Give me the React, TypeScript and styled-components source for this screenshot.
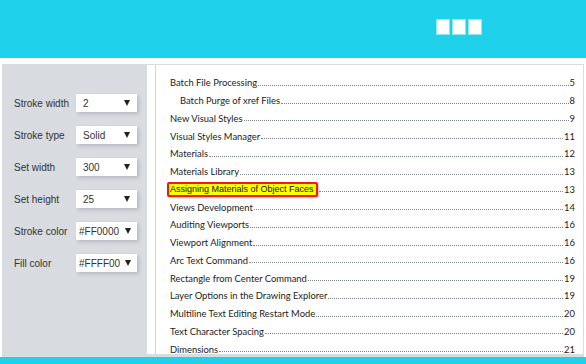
import styled, { createGlobalStyle } from 'styled-components';

const GlobalStyle = createGlobalStyle`
    html, body {
        margin: 0;
        padding: 0;
        background: #FFFFFF;
    }
    body {
        width: 586px;
        height: 364px;
        overflow: hidden;
        font-family: "Liberation Sans", Arial, sans-serif;
    }
`

const settings = [
    {label: 'Stroke width', value: '2', color: false},
    {label: 'Stroke type', value: 'Solid', color: false},
    {label: 'Set width', value: '300', color: false},
    {label: 'Set height', value: '25', color: false},
    {label: 'Stroke color', value: '#FF0000', color: true},
    {label: 'Fill color', value: '#FFFF00', color: true},
];

const entries = [
    {title: 'Batch File Processing', page: '5'},
    {title: 'Batch Purge of xref Files', page: '8', sub: true},
    {title: 'New Visual Styles', page: '9'},
    {title: 'Visual Styles Manager', page: '11'},
    {title: 'Materials', page: '12'},
    {title: 'Materials Library', page: '13'},
    {title: 'Assigning Materials of Object Faces', page: '13', marked: true},
    {title: 'Views Development', page: '14'},
    {title: 'Auditing Viewports', page: '16'},
    {title: 'Viewport Alignment', page: '16'},
    {title: 'Arc Text Command', page: '16'},
    {title: 'Rectangle from Center Command', page: '19'},
    {title: 'Layer Options in the Drawing Explorer', page: '19'},
    {title: 'Multiline Text Editing Restart Mode', page: '20'},
    {title: 'Text Character Spacing', page: '20'},
    {title: 'Dimensions', page: '21'},
];

export default function App(){
    return(
        <Container>
            <GlobalStyle/>
            <Header>
                <WindowBtn/>
                <WindowBtn/>
                <WindowBtn/>
            </Header>
            <Main>
                <SidePanel>
                    {settings.map((s) => (
                        <SettingRow key={s.label}>
                            <Label>{s.label}</Label>
                            <Select $color={s.color}>
                                <span>{s.value}</span>
                                <Arrow/>
                            </Select>
                        </SettingRow>
                    ))}
                </SidePanel>
                <Page>
                    <Sheet>
                        {entries.map((e) => (
                            <TocRow key={e.title} $sub={!!e.sub}>
                                {e.marked ? <Mark>{e.title}</Mark> : <Title>{e.title}</Title>}
                                <Leader/>
                                <PageNum>{e.page}</PageNum>
                            </TocRow>
                        ))}
                    </Sheet>
                </Page>
            </Main>
            <Footer/>
        </Container>
    );
}

const Container = styled.div`
    width: 586px;
    height: 364px;
    display: flex;
    flex-direction: column;
    overflow: hidden;
`
const Header = styled.div`
    height: 58px;
    flex-shrink: 0;
    background-color: #20D1EC;
    display: flex;
    justify-content: flex-end;
    align-items: flex-start;
    gap: 4px;
    padding: 20px 105px 0 0;
    box-sizing: border-box;
`
const WindowBtn = styled.div`
    width: 12px;
    height: 14px;
    background: #FFFFFF;
    box-shadow: 0 0 0 1px rgba(255, 255, 255, 0.5);
`
const Main = styled.div`
    margin: 6px 2px 0 2px;
    height: 293px;
    flex-shrink: 0;
    display: flex;
    background-color: #D8DBE0;
`
const SidePanel = styled.div`
    width: 145px;
    flex-shrink: 0;
    display: flex;
    flex-direction: column;
    gap: 14px;
    padding: 30px 0 0 12px;
    box-sizing: border-box;
`
const SettingRow = styled.div`
    display: flex;
    align-items: center;
    height: 18px;
`
const Label = styled.div`
    width: 62px;
    font-size: 10px;
    color: #333333;
`
const Select = styled.div<{$color: boolean}>`
    width: 61px;
    height: 18px;
    box-sizing: border-box;
    display: flex;
    align-items: center;
    justify-content: space-between;
    padding: ${(props) => (props.$color ? '0 6px 0 3px' : '0 7px 0 7px')};
    background: #FFFFFF;
    box-shadow: 2px 2px 4px rgba(0, 0, 0, 0.16);
    font-size: 10px;
    color: #333333;
`
const Arrow = styled.span`
    width: 0;
    height: 0;
    border-left: 3.5px solid transparent;
    border-right: 3.5px solid transparent;
    border-top: 6px solid #222222;
`
const Page = styled.div`
    flex: 1;
    margin: 1px 1px 3px 0;
    padding-left: 8px;
    background: #FFFFFF;
    overflow: hidden;
    display: flex;
`
const Sheet = styled.div`
    flex: 1;
    border-left: 1px solid #D2D4D8;
    padding: 9px 8px 0 14px;
    font-family: Lato, "Open Sans", sans-serif;
    font-size: 9.4px;
    color: #222222;
`
const TocRow = styled.div<{$sub: boolean}>`
    display: flex;
    align-items: center;
    height: 17.75px;
    padding-left: ${(props) => (props.$sub ? '10px' : '0')};
`
const Title = styled.span`
    white-space: nowrap;
`
const Mark = styled.span`
    white-space: nowrap;
    margin-left: -3px;
    height: 15px;
    box-sizing: border-box;
    display: flex;
    align-items: center;
    padding: 0 2px 0 1px;
    background: #FFFF00;
    border: 2px solid #F01818;
    border-radius: 2px;
    box-shadow: 1px 1px 2px rgba(0, 0, 0, 0.25);
    font-family: "Liberation Sans", Arial, sans-serif;
    font-size: 9px;
    color: #111111;
`
const Leader = styled.span`
    flex: 1;
    align-self: flex-end;
    margin: 0 1px 6px 1px;
    border-bottom: 1px dotted #7F8590;
`
const PageNum = styled.span`
    color: #222222;
`
const Footer = styled.div`
    flex: 1;
    background-color: #20D1EC;
`
